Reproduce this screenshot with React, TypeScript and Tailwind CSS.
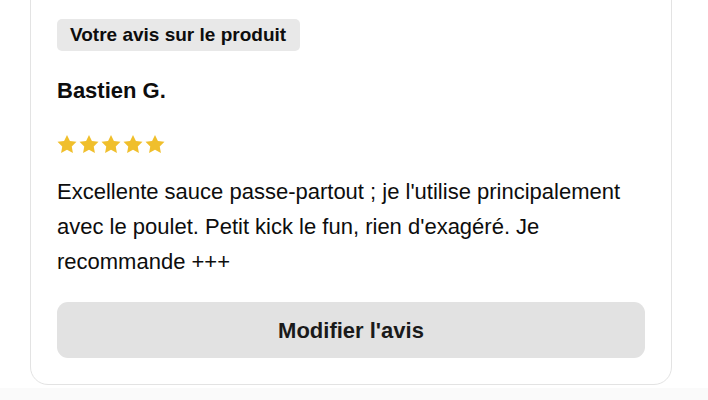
const Star = () => (
  <svg width="20" height="20" viewBox="0 0 24 23" className="fill-[#f0bf2c]">
    <path d="M12 0.6l3.5 7.2 7.9 1.1-5.7 5.5 1.4 7.8L12 18.5l-7.1 3.7 1.4-7.8L0.6 8.9l7.9-1.1z" />
  </svg>
);

const App = () => {
  return (
    <div className="w-[708px] h-[400px] overflow-hidden bg-[#fafafa] font-['Liberation_Sans',Arial,sans-serif] text-[#0d0d0d]">
      <div className="bg-white pl-[30px] pr-[36px] pb-[3px]">
        <div className="-mt-[20px] pt-[38px] px-[26px] pb-[26px] border border-[#e3e3e3] rounded-b-[18px] bg-white">
          <span className="inline-block bg-[#e8e8e8] rounded-[5px] pl-[13px] pr-[14px] h-[32px] leading-[32px] text-[19px] font-bold">
            Votre avis sur le produit
          </span>
          <div className="mt-[26px] text-[22px] font-bold leading-[28px]">Bastien G.</div>
          <div className="mt-[29px] flex gap-[2px]">
            <Star />
            <Star />
            <Star />
            <Star />
            <Star />
          </div>
          <p className="mt-[20px] text-[22px] leading-[35px]">
            Excellente sauce passe-partout ; je l'utilise principalement avec le poulet. Petit kick le fun, rien d'exagéré. Je recommande +++
          </p>
          <button className="mt-[23px] w-full h-[56px] rounded-[11px] bg-[#e2e2e2] text-[22px] font-bold text-[#1a1a1a]">
            Modifier l'avis
          </button>
        </div>
      </div>
    </div>
  );
};

export default App;
